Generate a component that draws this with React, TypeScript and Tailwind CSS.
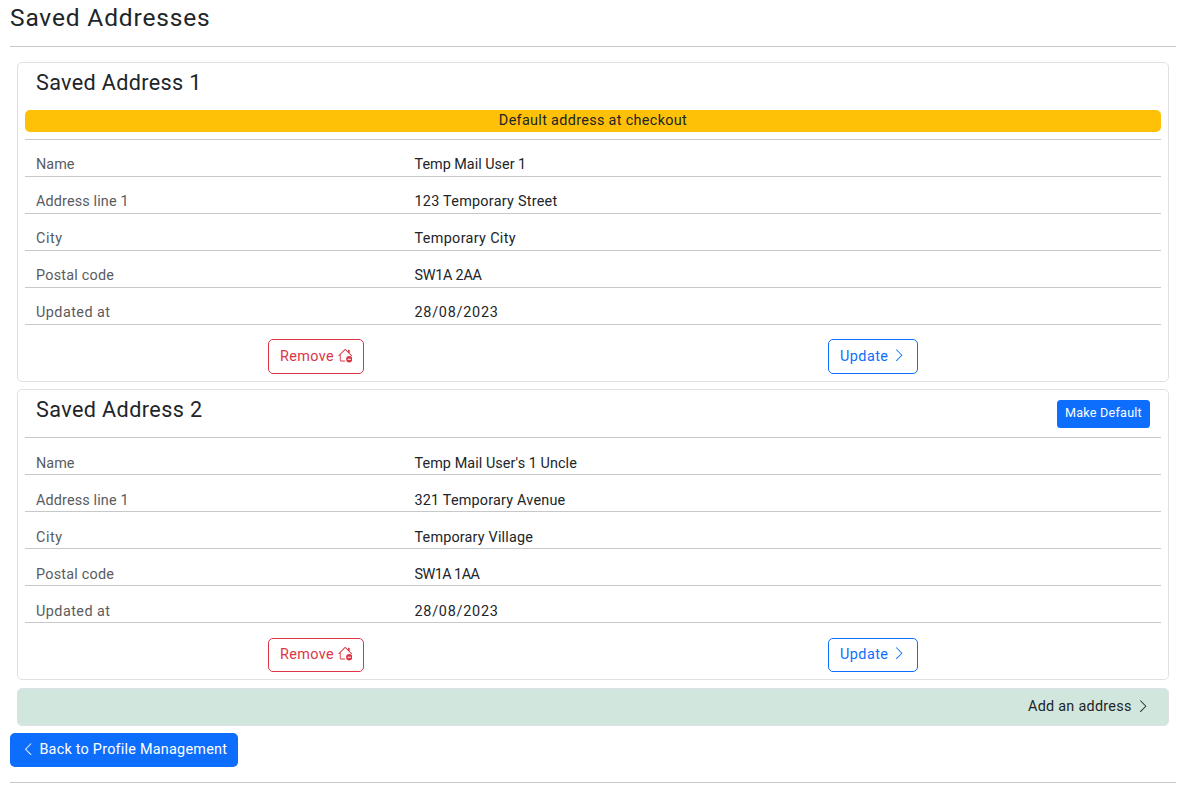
import { BsChevronLeft, BsChevronRight, BsHouseDash } from "react-icons/bs";

type Field = { label: string; labelClass: string; value: string; valueClass: string };

const labels = {
  name: { label: "Name", labelClass: "tracking-[0.05px]" },
  line: { label: "Address line 1", labelClass: "tracking-[0.14px]" },
  city: { label: "City", labelClass: "tracking-[0.6px]" },
  postal: { label: "Postal code", labelClass: "tracking-[0.22px]" },
  updated: { label: "Updated at", labelClass: "tracking-[0.46px]" },
};

const first: Field[] = [
  { ...labels.name, value: "Temp Mail User 1", valueClass: "tracking-[0px]" },
  { ...labels.line, value: "123 Temporary Street", valueClass: "tracking-[0.26px]" },
  { ...labels.city, value: "Temporary City", valueClass: "tracking-[0.34px]" },
  { ...labels.postal, value: "SW1A 2AA", valueClass: "tracking-[-0.26px]" },
  { ...labels.updated, value: "28/08/2023", valueClass: "tracking-[0.75px]" },
];

const second: Field[] = [
  { ...labels.name, value: "Temp Mail User's 1 Uncle", valueClass: "tracking-[0.07px]" },
  { ...labels.line, value: "321 Temporary Avenue", valueClass: "tracking-[0.2px]" },
  { ...labels.city, value: "Temporary Village", valueClass: "tracking-[0.18px]" },
  { ...labels.postal, value: "SW1A 1AA", valueClass: "tracking-[-0.55px]" },
  { ...labels.updated, value: "28/08/2023", valueClass: "tracking-[0.75px]" },
];

function Fields({ items, roomy }: { items: Field[]; roomy?: boolean }) {
  const leading = roomy ? "leading-[18px]" : "leading-[20px]";
  return (
    <dl className="border-t border-[#c7c8c9]">
      {items.map((f) => (
        <div key={f.label} className={`flex h-[37px] items-end border-b border-[#c7c8c9] pb-px pl-[11px] ${leading}`}>
          <dt className="w-[378.5px] text-[#595c5f]">
            <span className={f.labelClass}>{f.label}</span>
          </dt>
          <dd>
            <span className={f.valueClass}>{f.value}</span>
          </dd>
        </div>
      ))}
    </dl>
  );
}

function Actions({ compact }: { compact?: boolean }) {
  const height = compact ? "h-[34px] pb-px" : "h-[35px]";
  return (
    <div className="flex pl-[243px]">
      <button className={`flex ${height} w-24 items-center rounded-[5px] border border-[#dc3545] pl-[11px] text-[#dc3545]`}>
        <span className="tracking-[0.4px]">Remove</span>
        <BsHouseDash className="mb-[2px] ml-auto mr-[11px] size-[14.4px]" />
      </button>
      <button className={`ml-[464px] flex ${height} w-[90px] items-center rounded-[5px] border border-[#0d6efd] pl-[11px] text-[#0d6efd]`}>
        <span className="tracking-[0.45px]">Update</span>
        <BsChevronRight className="mb-[2px] ml-auto mr-[11px] size-[14.4px]" />
      </button>
    </div>
  );
}

export default function App() {
  return (
    <main className="h-[797px] bg-white pl-[10px] pr-[17px] font-['Roboto',sans-serif] text-[14.4px] text-[#212529]">
      <h1 className="flex h-[46px] items-start pt-[3px] text-[24.5px] leading-[30px]">
        <span className="tracking-[0.84px]">Saved Addresses</span>
      </h1>
      <hr className="border-[#c7c8c9]" />
      <div className="px-[7px] pt-[15px]">
        <section className="h-80 rounded-[5px] border border-[#dee2e6] px-[7px]">
          <h2 className="h-[47px] pl-[11px] pt-[7px] text-[21.6px] leading-[26px]">
            <span className="tracking-[0.34px]">Saved Address 1</span>
          </h2>
          <p className="mb-[7px] h-[22px] rounded-[5px] bg-[#ffc107] text-center leading-[21px]">
            <span className="tracking-[0.33px]">Default address at checkout</span>
          </p>
          <Fields items={first} />
          <div className="pt-[14px]">
            <Actions />
          </div>
        </section>
        <section className="mt-[7px] h-[291px] rounded-[5px] border border-[#dee2e6] px-[7px]">
          <div className="flex h-[47px] items-start justify-between pl-[11px] pr-[11px]">
            <h2 className="pt-[7px] text-[21.6px] leading-[26px]">
              <span className="tracking-[0.4px]">Saved Address 2</span>
            </h2>
            <button className="mt-[10px] h-7 w-[93px] rounded-[3.5px] bg-[#0d6efd] pb-[2px] text-[12.6px] text-white">
              <span className="tracking-[0.22px]">Make Default</span>
            </button>
          </div>
          <Fields items={second} roomy />
          <div className="pt-[15px]">
            <Actions compact />
          </div>
        </section>
        <a className="mt-2 flex h-[38px] items-center justify-end rounded-[5px] border border-[#dee2e6] bg-[#d1e7dd] pr-[18px]">
          <span className="tracking-[0.27px]">Add an address</span>
          <BsChevronRight className="mb-[2px] ml-[4px] size-[14.4px]" />
        </a>
      </div>
      <button className="mt-[7px] flex h-[34px] w-[228px] items-center rounded-[5px] bg-[#0d6efd] pl-[11px] text-white">
        <BsChevronLeft className="mb-[2px] mr-[4px] size-[14.4px]" />
        <span className="tracking-[0.24px]">Back to Profile Management</span>
      </button>
      <hr className="mt-[15px] border-[#c7c8c9]" />
    </main>
  );
}
